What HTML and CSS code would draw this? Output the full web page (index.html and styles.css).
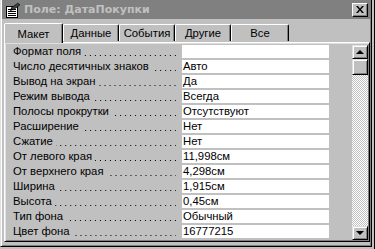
FILE: index.html
```html
<!DOCTYPE html>
<html lang="ru">
<head>
    <meta charset="UTF-8">
    <title>Поле: ДатаПокупки</title>
    <link rel="stylesheet" href="styles.css">
</head>
<body>
    <div class="window">
        <div class="titlebar">
            <svg class="title-icon" width="16" height="16" viewBox="0 0 16 16">
                <rect x="1.5" y="4.5" width="11" height="11" fill="#fff" stroke="#000"/>
                <rect x="3" y="7" width="8" height="1" fill="#000"/>
                <rect x="3" y="9" width="8" height="1" fill="#000"/>
                <rect x="3" y="11" width="8" height="1" fill="#000"/>
                <rect x="3" y="13" width="8" height="1" fill="#000"/>
                <path d="M6 6 L13 1 L15 3 L8 8 Z" fill="#404040" stroke="#000" stroke-width="0.6"/>
                <path d="M6 6 L5 9 L8 8 Z" fill="#000"/>
            </svg>
            <span class="title-text">Поле: ДатаПокупки</span>
            <button class="close-btn">
                <svg width="8" height="7" viewBox="0 0 8 7">
                    <path d="M0 0h2l2 2.5 2-2.5h2l-3 3.5 3 3.5h-2l-2-2.5-2 2.5h-2l3-3.5z" fill="#000"/>
                </svg>
            </button>
        </div>

        <div class="tabs">
            <div class="tab active">Макет</div>
            <div class="tab">Данные</div>
            <div class="tab">События</div>
            <div class="tab">Другие</div>
            <div class="tab">Все</div>
        </div>

        <div class="panel">
            <div class="props">
                <div class="row"><span class="label">Формат поля</span><span class="value"></span></div>
                <div class="row"><span class="label">Число десятичных знаков</span><span class="value">Авто</span></div>
                <div class="row"><span class="label">Вывод на экран</span><span class="value">Да</span></div>
                <div class="row"><span class="label">Режим вывода</span><span class="value">Всегда</span></div>
                <div class="row"><span class="label">Полосы прокрутки</span><span class="value">Отсутствуют</span></div>
                <div class="row"><span class="label">Расширение</span><span class="value">Нет</span></div>
                <div class="row"><span class="label">Сжатие</span><span class="value">Нет</span></div>
                <div class="row"><span class="label">От левого края</span><span class="value">11,998см</span></div>
                <div class="row"><span class="label">От верхнего края</span><span class="value">4,298см</span></div>
                <div class="row"><span class="label">Ширина</span><span class="value">1,915см</span></div>
                <div class="row"><span class="label">Высота</span><span class="value">0,45см</span></div>
                <div class="row"><span class="label">Тип фона</span><span class="value">Обычный</span></div>
                <div class="row"><span class="label">Цвет фона</span><span class="value">16777215</span></div>
                <div class="row row-cut"><span class="label-empty"></span><span class="value"></span></div>
            </div>
            <div class="scrollbar">
                <div class="sb-btn"><span class="arrow-up"></span></div>
                <div class="sb-thumb"></div>
                <div class="sb-track"></div>
                <div class="sb-btn"><span class="arrow-down"></span></div>
            </div>
        </div>
    </div>
    <div class="behind"></div>
</body>
</html>
```

FILE: styles.css
```css
body {
    margin: 0;
    height: 249px;
    overflow: hidden;
    display: flex;
    background-color: #c0c0c0;
    font-family: "Liberation Sans", Arial, sans-serif;
    font-size: 11.3px;
    color: #000;
}

.window {
    width: 368px;
    height: 247px;
    margin-top: -2px;
    padding: 0 1px;
    display: flex;
    flex-direction: column;
    background-color: #c0c0c0;
    border: 1px solid;
    border-color: #dfdfdf #000 #000 #dfdfdf;
    box-shadow: inset 1px 1px #fff, inset -1px -1px #808080;
}

.behind {
    width: 1px;
    margin-left: 2px;
    background-color: #000;
}

/* Title bar (inactive) */
.titlebar {
    height: 19px;
    margin-top: 1px;
    display: flex;
    align-items: center;
    background-color: #808080;
    color: #c0c0c0;
}
.title-icon {
    margin: 0 3px 0 3px;
}
.title-text {
    flex: 1;
    font-family: "DejaVu Sans", sans-serif;
    font-weight: bold;
    font-size: 11px;
}
.close-btn {
    width: 16px;
    height: 14px;
    margin-right: 2px;
    padding: 0;
    display: flex;
    align-items: center;
    justify-content: center;
    background-color: #c0c0c0;
    border: 1px solid;
    border-color: #fff #000 #000 #fff;
    box-shadow: inset -1px -1px #808080;
}

/* Tabs */
.tabs {
    height: 20px;
    margin-top: 3px;
    display: flex;
    align-items: flex-end;
    padding-left: 2px;
    position: relative;
    z-index: 1;
}
.tab {
    width: 52px;
    height: 16px;
    margin-bottom: 1px;
    display: flex;
    align-items: center;
    justify-content: center;
    border: 1px solid;
    border-bottom: none;
    border-color: #fff #000 transparent #fff;
    border-radius: 2px 2px 0 0;
    box-shadow: inset -1px 0 #808080;
    padding: 0 1px;
}
.tab.active {
    width: 55px;
    height: 19px;
    margin-bottom: -1px;
    background-color: #c0c0c0;
}
.tab:nth-child(5) {
    width: 54px;
}

/* Panel */
.panel {
    flex: 1;
    min-height: 0;
    margin: 0 0 4px 2px;
    width: 362px;
    display: flex;
    border: 1px solid;
    border-color: #fff #000 #000 #fff;
    box-shadow: inset 1px 1px #dfdfdf, inset -1px -1px #808080;
    padding: 2px 1px 1px 1px;
}
.props {
    flex: 1;
    overflow: hidden;
}
.row {
    height: 15px;
    display: grid;
    grid-template-columns: 176px 147px;
}
.label {
    height: 13px;
    line-height: 13px;
    padding-left: 7px;
    display: flex;
    white-space: nowrap;
}
/* dot leader */
.label::after {
    content: "";
    flex: 1;
    margin: 0 6px 0 3px;
    background-image: linear-gradient(to right, #000 0 1px, transparent 1px);
    background-size: 5px 1px;
    background-repeat: repeat-x;
    background-position: right 1px bottom 2px;
}
.value {
    height: 13px;
    line-height: 13px;
    padding-left: 1px;
    background-color: #fff;
    white-space: nowrap;
    overflow: hidden;
}

/* Scrollbar */
.scrollbar {
    width: 16px;
    display: flex;
    flex-direction: column;
}
.sb-btn,
.sb-thumb {
    height: 14px;
    box-sizing: border-box;
    display: flex;
    align-items: center;
    justify-content: center;
    background-color: #c0c0c0;
    border: 1px solid;
    border-color: #dfdfdf #000 #000 #dfdfdf;
    box-shadow: inset 1px 1px #fff, inset -1px -1px #808080;
}
.sb-thumb {
    height: 16px;
}
.sb-track {
    flex: 1;
    background: repeating-conic-gradient(#c0c0c0 0 25%, #fff 0 50%) 0 0 / 2px 2px;
}
.arrow-up,
.arrow-down {
    width: 0;
    height: 0;
    border-left: 4px solid transparent;
    border-right: 4px solid transparent;
}
.arrow-up {
    border-bottom: 4px solid #000;
}
.arrow-down {
    border-top: 4px solid #000;
}
```
